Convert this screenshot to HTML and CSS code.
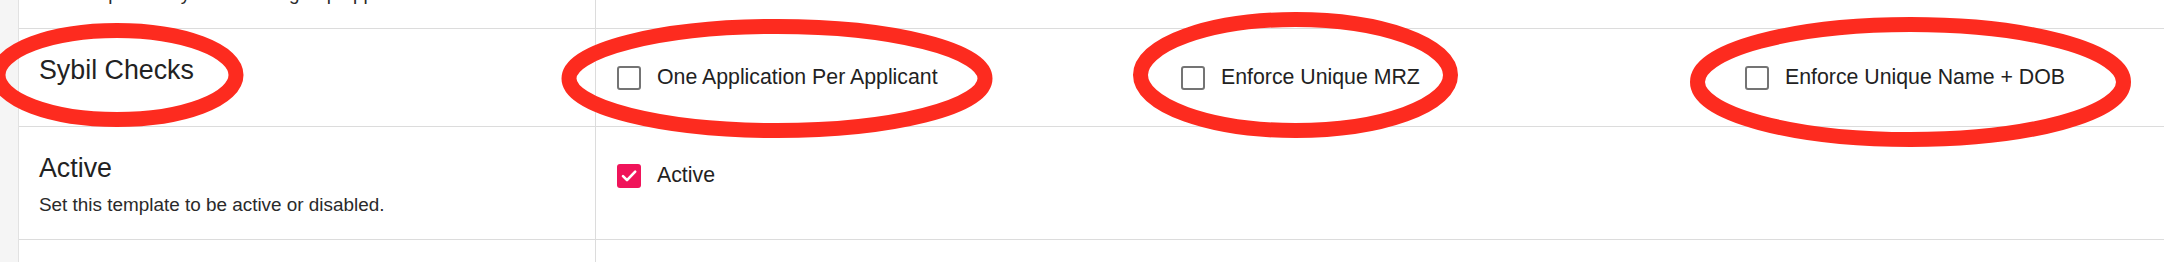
FILE: index.html
```html
<!DOCTYPE html>
<html lang="en">
<head>
<meta charset="utf-8">
<title>Template settings</title>
<link rel="stylesheet" href="styles.css">
</head>
<body>
<div class="page">
  <div class="rail"></div>
  <div class="panel">
    <div class="row row-scrolled">
      <div class="label-cell">
        <div class="title">Template</div>
        <div class="desc">The template may be used to group applicants.</div>
      </div>
      <div class="value-cell"></div>
    </div>
    <div class="row">
      <div class="label-cell">
        <div class="title">Sybil Checks</div>
      </div>
      <div class="value-cell">
        <label class="option"><span class="box"></span><span class="opt-text">One Application Per Applicant</span></label>
        <label class="option"><span class="box"></span><span class="opt-text">Enforce Unique MRZ</span></label>
        <label class="option"><span class="box"></span><span class="opt-text">Enforce Unique Name + DOB</span></label>
      </div>
    </div>
    <div class="row">
      <div class="label-cell">
        <div class="title">Active</div>
        <div class="desc">Set this template to be active or disabled.</div>
      </div>
      <div class="value-cell">
        <label class="option"><span class="box checked"><svg viewBox="0 0 24 24" width="24" height="24"><path d="M6 12.2 L10 16.2 L18.2 7.6" fill="none" stroke="#fff" stroke-width="2.6" stroke-linecap="round" stroke-linejoin="round"/></svg></span><span class="opt-text">Active</span></label>
      </div>
    </div>
    <div class="row row-empty">
      <div class="label-cell"></div>
      <div class="value-cell"></div>
    </div>
  </div>
</div>
<svg class="marks" width="2164" height="262" viewBox="0 0 2164 262">
  <g fill="none" stroke="#fd2b1f" stroke-width="15">
    <ellipse cx="117" cy="75" rx="119" ry="44.5"/>
    <ellipse cx="777" cy="78.5" rx="208" ry="52"/>
    <ellipse cx="1295.5" cy="75" rx="155" ry="55.5"/>
    <ellipse cx="1910.5" cy="82" rx="213" ry="57.5"/>
  </g>
</svg>
</body>
</html>
```

FILE: styles.css
```css
html, body {
  margin: 0;
  padding: 0;
  background: #ffffff;
  overflow: hidden;
  width: 2164px;
  height: 262px;
}

body {
  position: relative;
  font-family: "Liberation Sans", Arial, Helvetica, sans-serif;
  color: #222222;
}

.page {
  display: flex;
  height: 262px;
  overflow: hidden;
}

.rail {
  width: 18px;
  flex: none;
  background: #f5f5f5;
  border-right: 1px solid #e2e2e2;
}

.panel {
  flex: 1;
  margin-top: -84px;
  min-width: 0;
}

.row {
  display: flex;
  border-bottom: 1px solid #dcdcdc;
}

.label-cell {
  box-sizing: border-box;
  width: 577px;
  flex: none;
  padding: 26px 20px 21px 20px;
  border-right: 1px solid #dcdcdc;
}

.title {
  font-size: 26.8px;
  line-height: 31px;
  color: #222222;
  white-space: nowrap;
}

.desc {
  margin-top: 8px;
  font-size: 18.9px;
  line-height: 26px;
  color: #2a2a2a;
  white-space: nowrap;
}

.value-cell {
  flex: 1;
  display: flex;
  align-items: flex-start;
  padding: 36px 0 36px 21px;
  min-width: 0;
}

.option {
  width: 564px;
  flex: none;
  display: flex;
  align-items: center;
  gap: 16px;
}

.box {
  box-sizing: border-box;
  width: 24px;
  height: 24px;
  flex: none;
  border: 2.5px solid #747474;
  border-radius: 3px;
  background: #ffffff;
  display: flex;
  align-items: center;
  justify-content: center;
}

.box.checked {
  border: none;
  background: #f0145a;
}

.box svg {
  display: block;
}

.opt-text {
  font-size: 21.3px;
  line-height: 25px;
  color: #222222;
  white-space: nowrap;
}

.row-empty {
  height: 80px;
  border-bottom: none;
}

.marks {
  position: absolute;
  left: 0;
  top: 0;
  pointer-events: none;
}
```
